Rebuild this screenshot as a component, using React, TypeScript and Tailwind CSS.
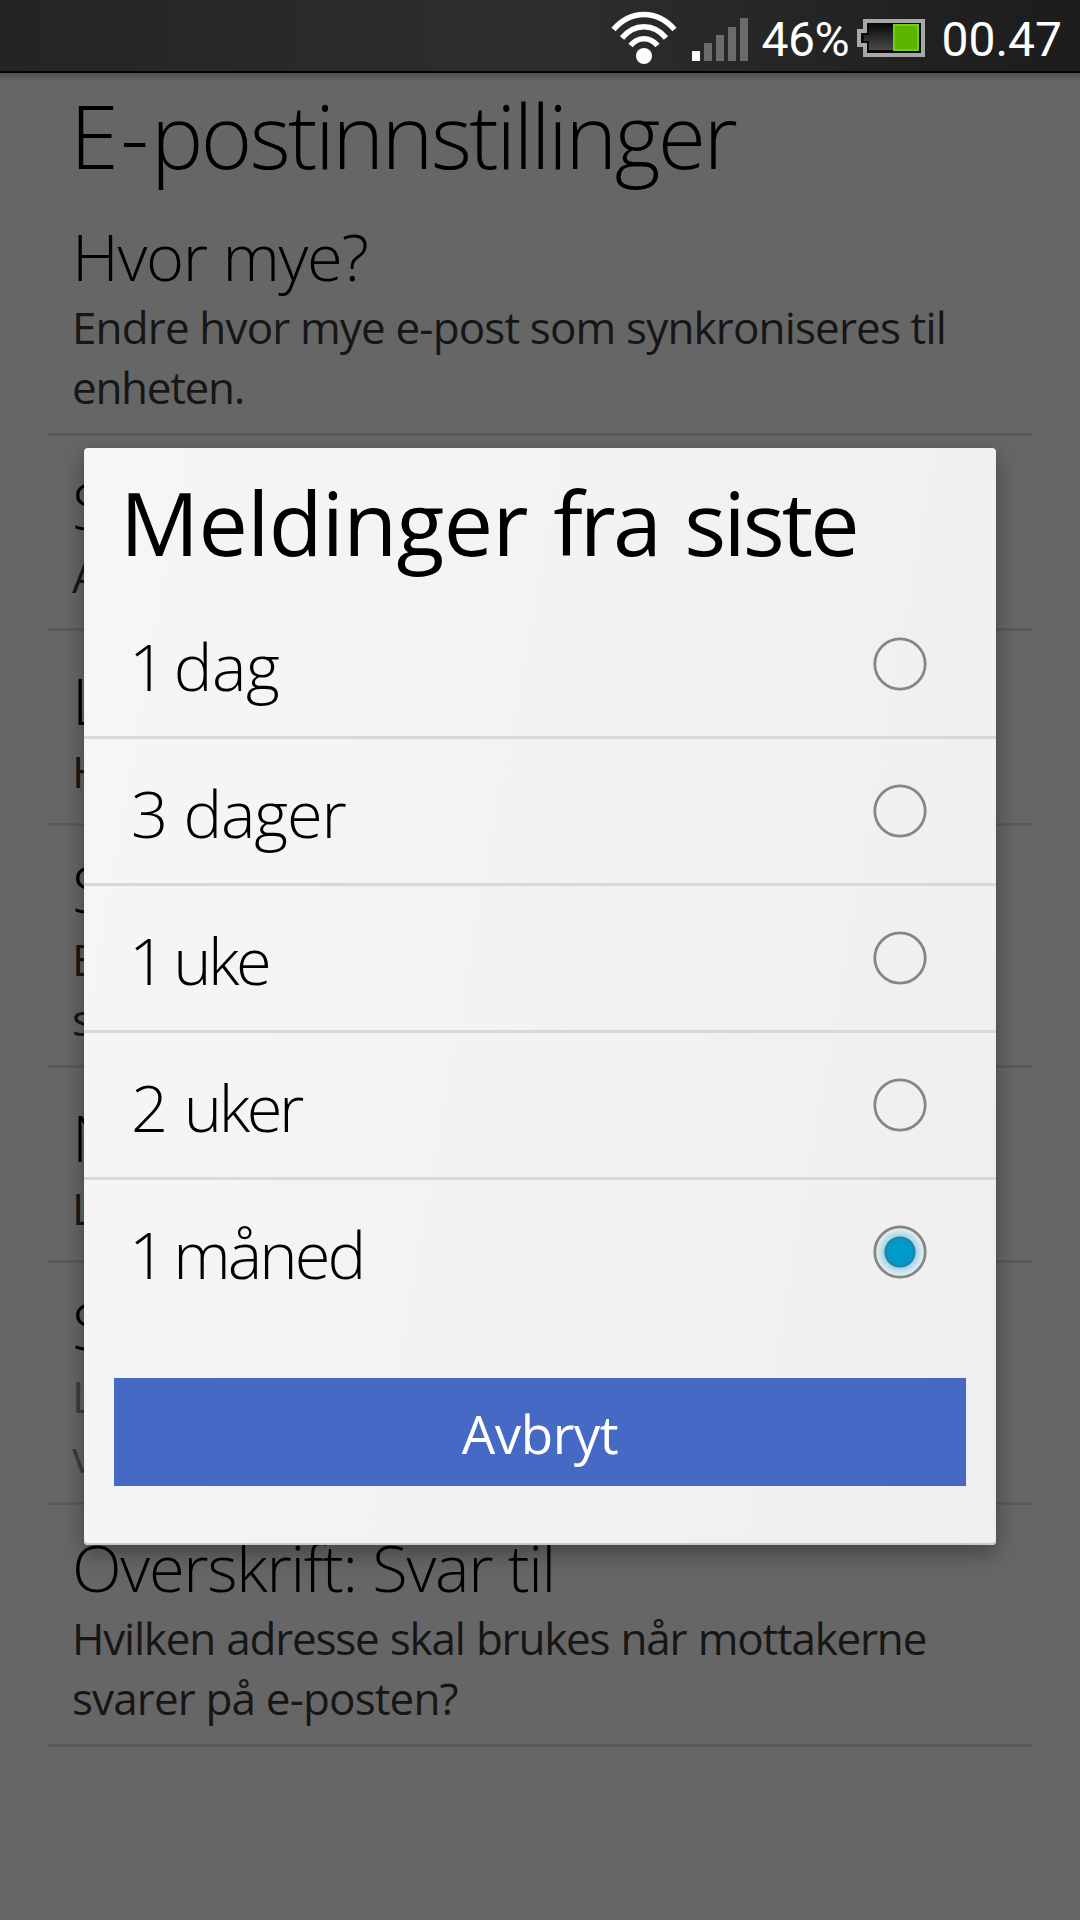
import React from "react";

const settings = [
  {
    title: "Hvor mye?",
    tracking: "tracking-[-1.3px]",
    lines: [
      { text: "Endre hvor mye e-post som synkroniseres til", tracking: "tracking-[-0.85px]" },
      { text: "enheten.", tracking: "tracking-[-1.3px]" },
    ],
  },
  { title: "S", lines: [{ text: "A" }] },
  { title: "L", lines: [{ text: "H" }] },
  { title: "S", lines: [{ text: "E" }, { text: "s" }] },
  { title: "N", lines: [{ text: "L" }] },
  { title: "S", lines: [{ text: "L" }, { text: "v" }], disabled: true },
  {
    title: "Overskrift: Svar til",
    tracking: "tracking-[-1.3px]",
    lines: [
      { text: "Hvilken adresse skal brukes når mottakerne", tracking: "tracking-[-1.2px] [word-spacing:1px]" },
      { text: "svarer på e-posten?", tracking: "tracking-[-0.85px]" },
    ],
  },
];

const options = [
  { label: "1 dag", spacing: "-ml-[2px] tracking-[-0.4px] [word-spacing:-8.5px]" },
  { label: "3 dager", spacing: "tracking-[-1.2px] [word-spacing:1px]" },
  { label: "1 uke", spacing: "-ml-[2px] tracking-[-3.6px] [word-spacing:-2.5px]" },
  { label: "2 uker", spacing: "tracking-[-3.4px] [word-spacing:5.5px]" },
  { label: "1 måned", spacing: "-ml-[2px] tracking-[-2.9px] [word-spacing:-4px]" },
];

const StatusBar = () => {
  return (
    <header className="flex h-[73px] w-full shrink-0 items-start justify-end border-b-2 border-[#050505] bg-linear-to-r from-[#242424] via-[#2e2e2e] to-[#1c1c1c] text-white">
      {/* wifi */}
      <svg className="mt-[10px] h-[56px] w-[66px]" viewBox="0 0 66 56" fill="none" stroke="white">
        <path d="M2.500 19.500C20 -0.500 46 -0.500 63.500 19.500" strokeWidth="5.500" />
        <path d="M11 28C23.500 13 42.500 13 55 28" strokeWidth="5.500" />
        <path d="M19.500 35.500C27 26.500 39 26.500 46.500 35.500" strokeWidth="5.500" />
        <circle cx="33" cy="46" r="8" fill="white" stroke="none" />
      </svg>
      {/* signal */}
      <svg className="mt-[18px] ml-[15px] h-[43px] w-[56px]" viewBox="0 0 56 43" fill="#6b6b6b">
        <rect x="0" y="33" width="8" height="10" fill="white" />
        <rect x="12" y="25" width="8" height="18" />
        <rect x="24" y="17" width="8" height="26" />
        <rect x="36" y="9" width="8" height="34" />
        <rect x="48" y="0" width="8" height="43" />
      </svg>
      <span className="ml-[13px] w-[96px] font-[Roboto,sans-serif] text-[48px] leading-[79px] tracking-[-0.5px] whitespace-nowrap">
        46%
      </span>
      {/* battery */}
      <svg className="mt-[19px] h-[38px] w-[68px]" viewBox="0 0 68 38">
        <defs>
          <linearGradient id="cell" x1="0" y1="0" x2="0" y2="1">
            <stop offset="0" stopColor="#0c0c0c" />
            <stop offset="1" stopColor="#4a4a4a" />
          </linearGradient>
        </defs>
        <path d="M6 0H68V38H6V28H0V10H6Z" fill="#a8a8a8" />
        <path d="M10 4H64V34H10V24H4V14H10Z" fill="#0a0a0a" />
        <path d="M12 6H61V31H12V22H7V16H12Z" fill="url(#cell)" />
        <rect x="36" y="5" width="26" height="27" fill="#70d010" />
        <rect x="38" y="7" width="22" height="23" fill="#5cb400" />
      </svg>
      <span className="mr-[18px] ml-[16px] font-[Roboto,sans-serif] text-[48px] leading-[79px] whitespace-nowrap">00.47</span>
    </header>
  );
};

const SettingsList = () => {
  return (
    <div className="px-12">
      {settings.map((item, i) => (
        <div
          key={i}
          className="flex min-h-[195px] flex-col justify-center border-b-3 border-[#5b5b5b] px-[24px] pt-[21px] pb-[16px] whitespace-nowrap"
        >
          <h2 className={`text-[65px] leading-[82px] font-light text-black ${item.tracking ?? ""}`}>{item.title}</h2>
          {item.lines.map((line) => (
            <p
              key={line.text}
              className={`text-[44px] leading-[60px] ${item.disabled ? "text-[#3d3d3d]" : "text-[#161616]"} ${line.tracking ?? ""}`}
            >
              {line.text}
            </p>
          ))}
        </div>
      ))}
    </div>
  );
};

const Radio = ({ checked }: { checked: boolean }) => {
  return (
    <svg className="h-[56px] w-[56px]" viewBox="0 0 56 56">
      <defs>
        <radialGradient id="glow">
          <stop offset="0.55" stopColor="#8fd0e8" />
          <stop offset="0.95" stopColor="#e9eff1" />
        </radialGradient>
      </defs>
      <circle cx="28" cy="28" r="25.200" fill={checked ? "url(#glow)" : "none"} stroke="#868686" strokeWidth="2.800" />
      {checked && <circle cx="28" cy="28" r="14.600" fill="#0099cc" stroke="#2b7f9c" strokeWidth="2" />}
    </svg>
  );
};

const Dialog = () => {
  return (
    <div className="absolute top-[448px] left-[84px] h-[1097px] w-[912px] rounded-[4px] bg-linear-100 from-[#f6f6f6] to-[#efefef] shadow-[inset_0_-2px_1px_#c8c8c8,0_8px_22px_rgba(0,0,0,0.35)]">
      <h1 className="h-[144px] pt-[14px] pl-[36px] text-[88px] leading-[120px] tracking-[-2.9px] whitespace-nowrap text-black [word-spacing:5.5px]">
        <span className="tracking-[-0.7px]">Meldinger</span> fra siste
      </h1>
      <ul>
        {options.map((option) => (
          <li
            key={option.label}
            className="flex h-[147px] items-center justify-between border-b-3 border-[#d8d8d8] pr-[68px] pl-[47px] last:border-transparent"
          >
            <span className={`pt-[3px] text-[65px] leading-[90px] font-light text-black ${option.spacing}`}>{option.label}</span>
            <Radio checked={option.label === "1 måned"} />
          </li>
        ))}
      </ul>
      <button className="mx-[30px] mt-[51px] block h-[108px] w-[852px] bg-[#4569c5] text-[53px] leading-[112px] tracking-[-0.5px] text-white">
        Avbryt
      </button>
    </div>
  );
};

const App = () => {
  return (
    <div className="relative flex h-[1920px] w-[1080px] flex-col overflow-hidden bg-[#666666] font-['Open_Sans',sans-serif]">
      <StatusBar />
      <div className="h-[9px] shrink-0 bg-linear-to-b from-[#505050] to-[#666666]" />
      <h1 className="h-[112px] pl-[70px] text-[88px] leading-[106px] font-light tracking-[-2.600px] whitespace-nowrap text-black">
        <span className="tracking-[2px]">E-</span>postinnstillinger
      </h1>
      <SettingsList />
      <Dialog />
    </div>
  );
};

export default App;
